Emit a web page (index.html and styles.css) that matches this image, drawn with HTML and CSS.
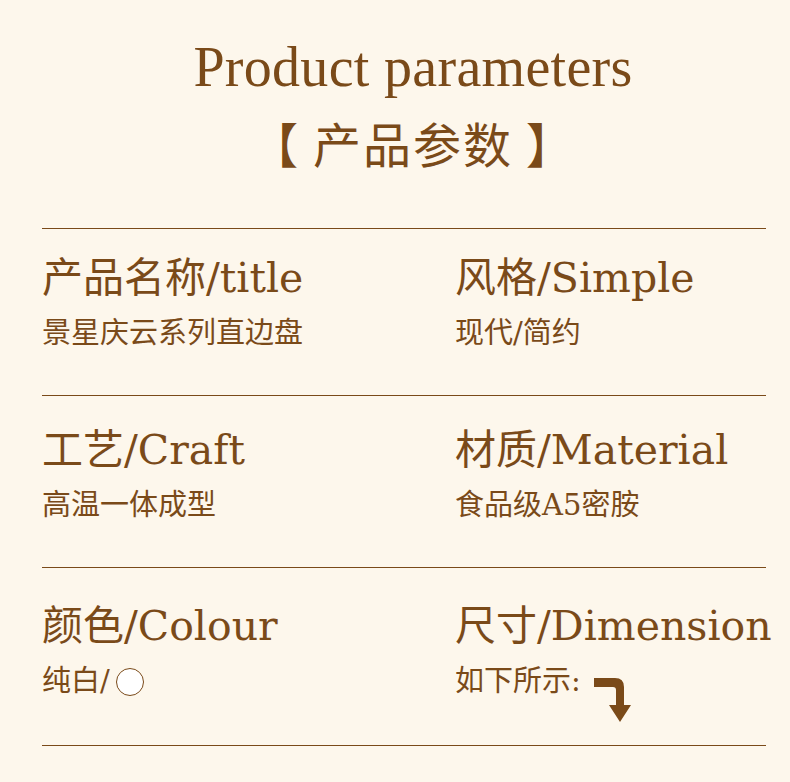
FILE: index.html
```html
<!DOCTYPE html>
<html lang="zh">
<head>
<meta charset="utf-8">
<link rel="stylesheet" href="styles.css">
</head>
<body>
<main class="page">
  <header class="head">
    <h1 class="title-en">Product parameters</h1>
    <h2 class="title-cn">【 产品参数 】</h2>
  </header>
  <section class="table">
    <div class="row row-1">
      <div class="cell">
        <div class="label">产品名称/title</div>
        <div class="value">景星庆云系列直边盘</div>
      </div>
      <div class="cell">
        <div class="label">风格/Simple</div>
        <div class="value">现代/简约</div>
      </div>
    </div>
    <div class="row row-2">
      <div class="cell">
        <div class="label">工艺/Craft</div>
        <div class="value">高温一体成型</div>
      </div>
      <div class="cell">
        <div class="label">材质/Material</div>
        <div class="value">食品级A5密胺</div>
      </div>
    </div>
    <div class="row row-3">
      <div class="cell">
        <div class="label">颜色/Colour</div>
        <div class="value">纯白/<span class="swatch"></span></div>
      </div>
      <div class="cell">
        <div class="label">尺寸/Dimension</div>
        <div class="value">如下所示:<svg class="arrow" width="38" height="45" viewBox="0 0 38 45"><path d="M0 0 H21 Q30 0 30 9 V27 H37 L26 44 L15 27 H22 V12 Q22 9 19 9 H0 Z" fill="#7a4a19"/></svg></div>
      </div>
    </div>
  </section>
</main>
</body>
</html>
```
FILE: styles.css
```css
html, body {
  margin: 0;
  padding: 0;
  background: #fdf7ec;
}
body {
  width: 790px;
  height: 782px;
  overflow: hidden;
  color: #7a4a19;
  font-family: "DejaVu Serif", "Noto Sans CJK SC", serif;
}
.page {
  padding: 0 24px 0 42px;
}
.head {
  display: flex;
  flex-direction: column;
  align-items: center;
  padding: 35px 0 0 18px;
}
.title-en {
  margin: 0;
  font-family: "Liberation Serif", serif;
  font-weight: normal;
  font-size: 56px;
  line-height: 64px;
  letter-spacing: 0.3px;
}
.title-cn {
  margin: 15px 0 0;
  font-family: "Noto Sans CJK SC", sans-serif;
  font-weight: 400;
  font-size: 48px;
  line-height: 56px;
  letter-spacing: 2px;
}
.table {
  margin-top: 58px;
  border-top: 1px solid #7a4a19;
}
.row {
  display: grid;
  grid-template-columns: 413px 1fr;
  box-sizing: border-box;
  border-bottom: 1px solid #7a4a19;
}
.row-1 {
  height: 167px;
  padding-top: 24px;
}
.row-2 {
  height: 172px;
  padding-top: 29px;
}
.row-3 {
  height: 178px;
  padding-top: 33px;
}
.label {
  font-size: 41px;
  line-height: 50px;
  white-space: nowrap;
}
.value {
  margin-top: 12px;
  font-size: 29px;
  line-height: 36px;
  display: flex;
  align-items: flex-start;
  white-space: nowrap;
}
.swatch {
  display: inline-block;
  width: 26px;
  height: 26px;
  margin: 5px 0 0 6px;
  border: 1px solid #7a4a19;
  border-radius: 50%;
  background: #ffffff;
}
.arrow {
  margin: 15px 0 0 13px;
}
```
